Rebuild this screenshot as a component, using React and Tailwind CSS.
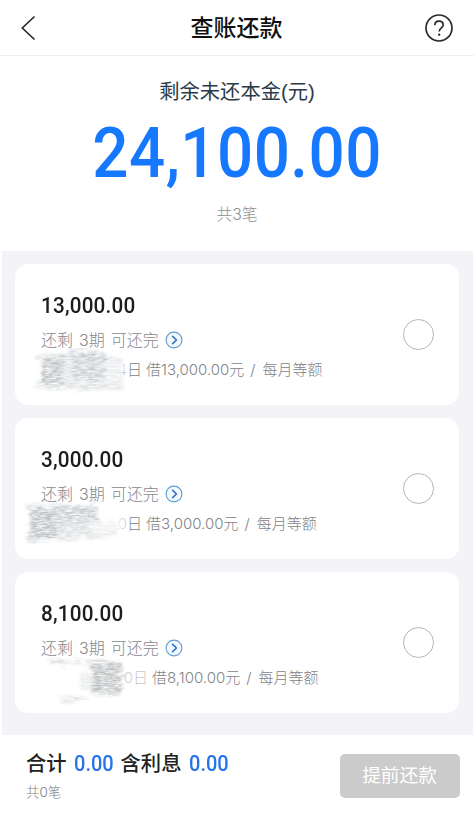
const loans = [
  {
    id: 1,
    amount: '13,000.00',
    lead: '4',
    leadClass: 'w-[86px] text-[#c9ccd0]',
    dayClass: '',
    smudge: {
      box: 'left-[16px] top-[84px]',
      width: 98,
      height: 62,
      seed: 4,
      fade: 'M34 0 L92 6 L93 22 L89 24 L90 42 L40 42 L4 42 L3 8 Z',
      strokes: [
        { d: 'M52 4 L86 7', w: 6, c: '#b4b8bc', o: 0.9 },
        { d: 'M18 9 L106 12', w: 4, c: '#bbbfc3', o: 0.8 },
        { d: 'M25 23 L46 25', w: 28, c: '#b0b6bb', o: 0.95 },
        { d: 'M46 23 L55 23', w: 26, c: '#d5d8da', o: 0.8 },
        { d: 'M54 21 L88 20', w: 26, c: '#bcc1c5', o: 0.85 },
        { d: 'M20 38 L106 39', w: 6, c: '#d0d3d6', o: 0.8 },
        { d: 'M88 23 L105 25', w: 28, c: '#e3e5e7', o: 0.8 },
      ],
    },
  },
  {
    id: 2,
    amount: '3,000.00',
    lead: '0',
    leadClass: 'w-[86px] text-[#d5d7da]',
    dayClass: '',
    smudge: {
      box: 'left-[8px] top-[81px]',
      width: 102,
      height: 62,
      seed: 9,
      fade: 'M14 6 L84 2 L95 14 L99 36 L90 44 L50 46 L4 42 L3 8 Z',
      strokes: [
        { d: 'M18 9 L78 8', w: 4, c: '#bbbfc3', o: 0.85 },
        { d: 'M21 25 L48 26', w: 33, c: '#afb5ba', o: 0.95 },
        { d: 'M48 17 L88 14', w: 17, c: '#b9bec2', o: 0.85 },
        { d: 'M48 31 L84 29', w: 18, c: '#d0d4d6', o: 0.85 },
        { d: 'M84 30 L108 27', w: 14, c: '#e8eaeb', o: 0.7 },
        { d: 'M24 43 L108 35', w: 4, c: '#dbdee0', o: 0.75 },
      ],
    },
  },
  {
    id: 3,
    amount: '8,100.00',
    lead: '0',
    leadClass: 'w-[92px] text-[#cfd2d5]',
    dayClass: 'text-[#c6c9cd]',
    smudge: {
      box: 'left-[29px] top-[85px]',
      width: 90,
      height: 62,
      seed: 15,
      fade: 'M4 2 L76 4 L80 34 L70 42 L10 42 L2 32 Z',
      strokes: [
        { d: 'M19 4 L52 5', w: 5, c: '#cfd1d3', o: 0.8 },
        { d: 'M56 7 L92 7', w: 5, c: '#babcbf', o: 0.8 },
        { d: 'M61 22 L92 21', w: 30, c: '#aeb1b4', o: 0.9 },
        { d: 'M50 24 L62 24', w: 16, c: '#e0e2e3', o: 0.8 },
        { d: 'M28 40 L60 42', w: 4, c: '#cbcdcf', o: 0.8 },
      ],
    },
  },
];

// Pencil-like scribble that hides the date of a loan
const Smudge = ({ id, data }) => (
  <svg
    className={`absolute ${data.box}`}
    width={data.width}
    height={data.height}
    viewBox={`0 0 ${data.width} ${data.height}`}
  >
    <defs>
      <filter id={`grain-${id}`} x="-20%" y="-20%" width="140%" height="140%" colorInterpolationFilters="sRGB">
        <feTurbulence type="fractalNoise" baseFrequency="0.14 0.6" numOctaves="3" seed={data.seed} result="noise" />
        <feColorMatrix in="noise" type="matrix" values="0 0 0 0 0  0 0 0 0 0  0 0 0 0 0  0 1.7 0 0 -0.2" result="holes" />
        <feTurbulence type="fractalNoise" baseFrequency="0.04 0.5" numOctaves="2" seed={data.seed + 1} result="shift" />
        <feDisplacementMap in="SourceGraphic" in2="shift" scale="14" xChannelSelector="R" result="rough" />
        <feGaussianBlur in="rough" stdDeviation="0.8" result="smooth" />
        <feComposite in="smooth" in2="holes" operator="in" />
        <feGaussianBlur stdDeviation="0.45" />
      </filter>
      <filter id={`soft-${id}`}>
        <feGaussianBlur stdDeviation="1.2" />
      </filter>
    </defs>
    <path d={data.fade} fill="#fff" opacity="0.95" filter={`url(#soft-${id})`} />
    <g transform="translate(-14 0)" filter={`url(#grain-${id})`} fill="none" opacity="0.88">
      {data.strokes.map((s) => (
        <path key={s.d} d={s.d} stroke={s.c} strokeWidth={s.w} opacity={s.o} />
      ))}
    </g>
  </svg>
);

const DetailIcon = () => (
  <svg width="18" height="18" viewBox="0 0 18 18" fill="none">
    <circle cx="9" cy="9" r="7.9" fill="#f3f9fe" stroke="#5b9bd0" strokeWidth="1.1" />
    <path d="M7.2 4.9 L11.4 9 L7.2 13.1" stroke="#2c6fc4" strokeWidth="1.5" />
  </svg>
);

const LoanCard = ({ loan }) => (
  <div className="relative flex h-[141px] items-center justify-between rounded-[13px] bg-white pl-[26px] pr-[25px]">
    <div className="h-full whitespace-nowrap pt-[26px]">
      <div className="origin-left scale-x-[0.92] font-[Roboto] text-[22.5px] font-medium leading-[31px] tracking-[0.2px] text-[#1d1d1f]">
        {loan.amount}
      </div>
      <div className="mt-[6px] flex h-[26px] items-center text-[16px] font-light text-[#85898e]">
        <span className="mr-[6px]">还剩</span>
        <span className="mr-[6px]">3期</span>
        <span className="mr-[6px]">可还完</span>
        <DetailIcon />
      </div>
      <div className="mt-[5px] flex h-[26px] items-center text-[15px] font-light text-[#808489]">
        <span className={`text-right ${loan.leadClass}`}>{loan.lead}</span>
        <span className={`mr-[4px] ${loan.dayClass}`}>日</span>
        <span className="mr-[6px]">借{loan.amount}元</span>
        <span className="mr-[7px]">/</span>
        <span>每月等额</span>
      </div>
    </div>
    <button className="size-[31px] rounded-full border border-[#b5b5b5]" />
    <Smudge id={loan.id} data={loan.smudge} />
  </div>
);

const Sum = ({ value }) => (
  <span className="w-[39px] origin-left scale-x-[0.91] font-[Roboto] text-[22px] font-medium text-[#2673ea]">
    {value}
  </span>
);

const App = () => {
  return (
    <div className="flex h-[817px] w-[474px] flex-col overflow-hidden bg-white font-[Inter,'Noto_Sans_CJK_SC',sans-serif]">
      {/* Header */}
      <header className="flex h-[56px] items-center justify-between border-b border-[#efeff1] pl-[20px] pr-[21px]">
        <svg width="28" height="28" viewBox="0 0 28 28" fill="none" stroke="#2b2b2b" strokeWidth="1.7">
          <path d="M14.5 2.5 L2.3 14 L14.5 25.5" />
        </svg>
        <h1 className="text-[23px] font-medium leading-[34px] text-[#111]">查账还款</h1>
        <svg width="28" height="28" viewBox="0 0 28 28" fill="none" stroke="#2b2b2b" strokeWidth="1.7">
          <circle cx="14" cy="14" r="13" />
          <path d="M9.8 11.2 C9.8 8.8 11.5 7.2 14 7.2 C16.5 7.2 18.2 8.8 18.2 11 C18.2 13.7 14.2 14.2 14.2 17.4" />
          <path d="M14.2 19.6 V21.8" strokeWidth="2" />
        </svg>
      </header>

      {/* Remaining principal */}
      <section className="flex h-[194.5px] flex-col items-center pt-[21px]">
        <div className="font-['Liberation_Sans','Noto_Sans_CJK_SC',sans-serif] text-[20.3px] leading-[30px] text-[#2b3a48]">
          剩余未还本金(元)
        </div>
        <div className="mt-[7px] scale-x-[0.91] font-[Roboto] text-[70px] font-medium leading-[78px] tracking-[0.5px] text-[#1677ff]">
          24,100.00
        </div>
        <div className="mt-[11px] text-[15.8px] font-light leading-[24px] text-[#8c8f94]">共3笔</div>
      </section>

      {/* Loans */}
      <main className="mx-[1.5px] flex h-[484.5px] flex-col gap-[13px] bg-[#f3f3f8] px-[13.5px] pt-[13px]">
        {loans.map((loan) => (
          <LoanCard key={loan.id} loan={loan} />
        ))}
      </main>

      {/* Total */}
      <footer className="flex flex-1 items-start justify-between pl-[26px] pr-[14.5px]">
        <div className="pt-[14px]">
          <div className="flex items-center gap-[7.5px] whitespace-nowrap text-[20.3px] font-medium leading-[30px] text-[#222]">
            <span>合计</span>
            <Sum value="0.00" />
            <span>含利息</span>
            <Sum value="0.00" />
          </div>
          <div className="mt-[3px] text-[13.4px] font-light leading-[20px] text-[#808286]">共0笔</div>
        </div>
        <button className="mt-[19px] h-[44px] w-[120px] rounded-[5px] bg-[#cbcbcb] text-[18.7px] text-white">
          提前还款
        </button>
      </footer>
    </div>
  );
};

export default App;
